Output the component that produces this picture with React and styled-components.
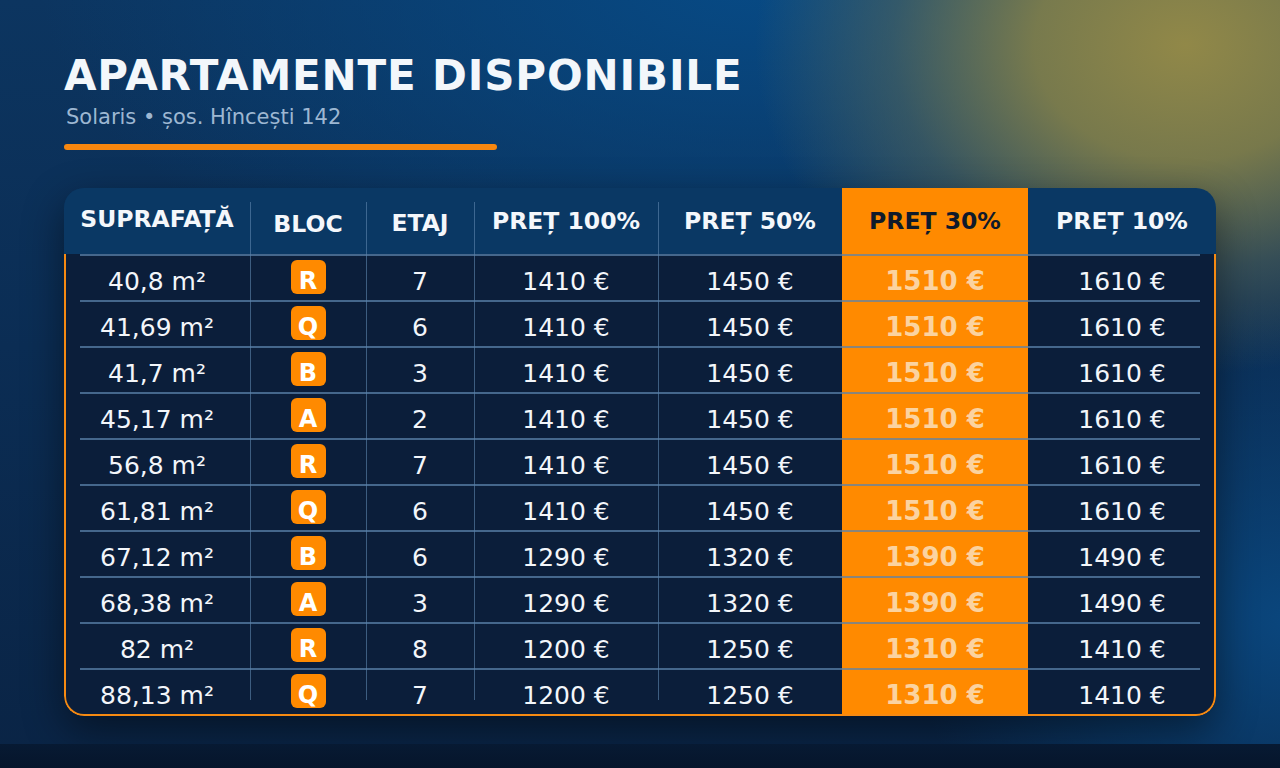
import React from "react";
import styled, { createGlobalStyle } from "styled-components";

const COLS = "186px 116px 108px 184px 184px 186px 188px";
const FONT = '"DejaVu Sans", "Noto Sans", sans-serif';

const Global = createGlobalStyle`
  html, body { margin: 0; padding: 0; }
  body { font-family: ${FONT}; background: #0a2444; }
  * { box-sizing: border-box; }
`;

const Page = styled.div`
  width: 1280px;
  height: 768px;
  display: flex;
  flex-direction: column;
  overflow: hidden;
  background:
    radial-gradient(ellipse 430px 330px at 1185px 45px, rgba(145, 136, 72, 1) 0%, rgba(135, 130, 72, 0.88) 35%, rgba(95, 108, 86, 0.5) 68%, rgba(60, 80, 90, 0) 100%),
    radial-gradient(ellipse 380px 320px at 1290px 620px, rgba(10, 72, 128, 0.95) 0%, rgba(10, 60, 110, 0) 100%),
    radial-gradient(ellipse 720px 360px at 760px -20px, #074a85 0%, rgba(8, 70, 125, 0) 100%),
    linear-gradient(180deg, #0c3560 0%, #0b2d54 45%, #0a2445 100%);
`;

const Main = styled.main`
  flex: 1;
  padding: 55px 64px 0;
  display: flex;
  flex-direction: column;
  align-items: flex-start;
`;

const Title = styled.h1`
  margin: 0;
  font-family: ${FONT};
  font-weight: 700;
  font-size: 42px;
  line-height: 1;
  letter-spacing: 0.85px;
  color: #f3f7fb;
`;

const Subtitle = styled.div`
  margin-top: 10px;
  font-size: 21px;
  line-height: 1;
  color: #9db7d2;
  padding-left: 2px;
`;

const Bar = styled.div`
  margin-top: 16px;
  width: 433px;
  height: 6px;
  border-radius: 3px;
  background: #f7870f;
`;

const Card = styled.section`
  margin-top: 38px;
  width: 1152px;
  border-radius: 20px;
  box-shadow: 0 14px 40px rgba(0, 0, 0, 0.45);
`;

const HeadRow = styled.div`
  display: grid;
  grid-template-columns: ${COLS};
  height: 66px;
  background: #0a3864;
  border-radius: 20px 20px 0 0;
  overflow: hidden;
`;

const HeadCell = styled.div`
  position: relative;
  display: flex;
  align-items: center;
  justify-content: center;
  font-weight: 700;
  font-size: 23.5px;
  color: ${(p) => (p.$hl ? "#0f1a2b" : "#f4f7fb")};
  background: ${(p) => (p.$hl ? "#ff8a00" : "transparent")};
  white-space: nowrap;

  &::before {
    content: ${(p) => (p.$div ? "''" : "none")};
    position: absolute;
    left: 0;
    top: 14px;
    bottom: 0;
    width: 1px;
    background: rgba(95, 135, 175, 0.6);
  }

  span {
    display: inline-block;
    transform: translateY(${(p) => p.$shift || 0}px);
  }
`;

const Body = styled.div`
  position: relative;
  background: #0b1e3a;
  border-radius: 0 0 20px 20px;
  overflow: hidden;
  padding-bottom: 2px;

  &::after {
    content: "";
    position: absolute;
    inset: 0;
    border: 2px solid #f68a12;
    border-top: 0;
    border-radius: 0 0 20px 20px;
    pointer-events: none;
    z-index: 2;
  }
`;

const Row = styled.div`
  position: relative;
  display: grid;
  grid-template-columns: ${COLS};
  height: 46px;

  &::before {
    content: "";
    position: absolute;
    top: 0;
    left: 16px;
    right: 16px;
    height: 2px;
    background: rgba(92, 132, 172, 0.72);
    z-index: 1;
  }
`;

const Cell = styled.div`
  position: relative;
  display: flex;
  align-items: center;
  justify-content: center;
  padding-top: ${(p) => (p.$badge ? 0 : 8)}px;
  font-size: ${(p) => (p.$hl ? 26 : 25)}px;
  font-weight: ${(p) => (p.$hl ? 700 : 400)};
  color: ${(p) => (p.$hl ? "#fbd3a0" : "#f3f6fa")};
  background: ${(p) => (p.$hl ? "#ff8a00" : "transparent")};
  white-space: nowrap;

  &::before {
    content: ${(p) => (p.$div ? "''" : "none")};
    position: absolute;
    left: 0;
    top: 0;
    bottom: ${(p) => (p.$last ? 14 : 0)}px;
    width: 1px;
    background: rgba(95, 135, 175, 0.6);
  }
`;

const Badge = styled.span`
  width: 35px;
  height: 34px;
  border-radius: 6px;
  background: #ff8a00;
  color: #ffffff;
  font-weight: 700;
  font-size: 24px;
  display: flex;
  align-items: center;
  justify-content: center;
  padding-top: 7px;
  line-height: 1;
`;

const Footer = styled.footer`
  height: 24px;
  background: linear-gradient(180deg, #071a33 0%, #06152b 100%);
`;

const headers = [
  { t: "SUPRAFAȚĂ", shift: -2 },
  { t: "BLOC", shift: 3, div: true },
  { t: "ETAJ", shift: 2, div: true },
  { t: "PREȚ 100%", div: true },
  { t: "PREȚ 50%", div: true },
  { t: "PREȚ 30%", hl: true },
  { t: "PREȚ 10%" },
];

const rows = [
  ["40,8 m²", "R", "7", 1410, 1450, 1510, 1610],
  ["41,69 m²", "Q", "6", 1410, 1450, 1510, 1610],
  ["41,7 m²", "B", "3", 1410, 1450, 1510, 1610],
  ["45,17 m²", "A", "2", 1410, 1450, 1510, 1610],
  ["56,8 m²", "R", "7", 1410, 1450, 1510, 1610],
  ["61,81 m²", "Q", "6", 1410, 1450, 1510, 1610],
  ["67,12 m²", "B", "6", 1290, 1320, 1390, 1490],
  ["68,38 m²", "A", "3", 1290, 1320, 1390, 1490],
  ["82 m²", "R", "8", 1200, 1250, 1310, 1410],
  ["88,13 m²", "Q", "7", 1200, 1250, 1310, 1410],
];

export default function App() {
  return (
    <>
      <Global />
      <Page>
        <Main>
          <Title>APARTAMENTE DISPONIBILE</Title>
          <Subtitle>Solaris • șos. Hîncești 142</Subtitle>
          <Bar />
          <Card>
            <HeadRow>
              {headers.map((h) => (
                <HeadCell key={h.t} $hl={h.hl} $div={h.div} $shift={h.shift}>
                  <span>{h.t}</span>
                </HeadCell>
              ))}
            </HeadRow>
            <Body>
              {rows.map((r, i) => {
                const last = i === rows.length - 1;
                return (
                  <Row key={i}>
                    <Cell>{r[0]}</Cell>
                    <Cell $badge $div $last={last}>
                      <Badge>{r[1]}</Badge>
                    </Cell>
                    <Cell $div $last={last}>{r[2]}</Cell>
                    <Cell $div $last={last}>{r[3]} €</Cell>
                    <Cell $div $last={last}>{r[4]} €</Cell>
                    <Cell $hl>{r[5]} €</Cell>
                    <Cell>{r[6]} €</Cell>
                  </Row>
                );
              })}
            </Body>
          </Card>
        </Main>
        <Footer />
      </Page>
    </>
  );
}
